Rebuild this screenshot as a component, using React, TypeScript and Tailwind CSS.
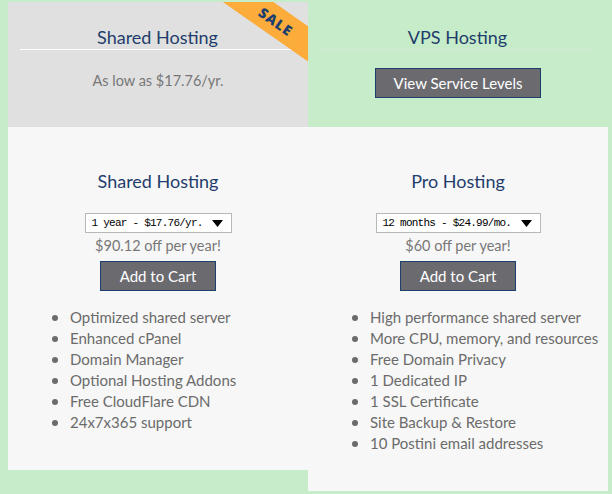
import React from "react";

const sharedFeatures = [
  "Optimized shared server",
  "Enhanced cPanel",
  "Domain Manager",
  "Optional Hosting Addons",
  "Free CloudFlare CDN",
  "24x7x365 support",
];

const proFeatures = [
  "High performance shared server",
  "More CPU, memory, and resources",
  "Free Domain Privacy",
  "1 Dedicated IP",
  "1 SSL Certificate",
  "Site Backup & Restore",
  "10 Postini email addresses",
];

function FakeSelect({ label, width }: { label: string; width: string }) {
  return (
    <div
      className={`mt-[19px] mx-auto h-[20px] ${width} flex items-center justify-between bg-white border border-[#b8b8b8] pl-[6px] pr-[8px]`}
    >
      <span className="font-['Liberation_Mono',monospace] text-[11px] tracking-[-0.75px] text-black">
        {label}
      </span>
      <svg width="11" height="7" viewBox="0 0 11 7">
        <path d="M0 0 L11 0 L5.5 7 Z" fill="#000" />
      </svg>
    </div>
  );
}

function Plan({
  title,
  option,
  selectWidth,
  saving,
  buttonWidth,
  features,
  height,
}: {
  title: string;
  option: string;
  selectWidth: string;
  saving: string;
  buttonWidth: string;
  features: string[];
  height: string;
}) {
  return (
    <div className={`${height} bg-[#f7f7f7] flex flex-col`}>
      <h2 className="pt-[41px] leading-[26px] text-[18px] text-center text-[#1f3d6b]">
        {title}
      </h2>
      <FakeSelect label={option} width={selectWidth} />
      <p className="mt-[3px] leading-[20px] text-[14.5px] text-center text-[#777]">
        {saving}
      </p>
      <button
        className={`mt-[5px] mx-auto h-[30px] ${buttonWidth} bg-[#6b6b6f] border border-[#1d3f6e] text-white text-[15px]`}
      >
        Add to Cart
      </button>
      <ul className="mt-[16px] pl-[44px]">
        {features.map((f) => (
          <li
            key={f}
            className="flex items-center h-[21px] text-[15px] text-[#6b6b6b] whitespace-nowrap"
          >
            <span className="shrink-0 w-[6px] h-[6px] rounded-full bg-[#6b6b6b] mr-[12px]" />
            {f}
          </li>
        ))}
      </ul>
    </div>
  );
}

export default function App() {
  return (
    <div className="w-[612px] h-[494px] bg-[#c7ecca] pt-[2px] pl-[8px] font-['Lato',sans-serif]">
      <div className="grid grid-cols-2 w-[600px] items-start">
        <div className="flex flex-col">
          <div className="relative h-[125px] bg-[#e0e0e0] overflow-hidden">
            <h2 className="ml-[12px] mr-[13px] pt-[23px] leading-[24px] text-[18px] text-center text-[#1f3d6b] border-b border-white">
              Shared Hosting
            </h2>
            <p className="mt-[21px] leading-[20px] text-[14.5px] text-center text-[#777]">
              As low as $17.76/yr.
            </p>
            <div className="absolute left-[188px] top-[5px] w-[160px] h-[29px] bg-[#fbac3a] rotate-[35deg] flex items-center justify-center">
              <span className="font-['Open_Sans',sans-serif] font-extrabold text-[14px] tracking-[1px] text-[#1d3f6e]">
                SALE
              </span>
            </div>
          </div>
          <Plan
            title="Shared Hosting"
            option="1 year - $17.76/yr."
            selectWidth="w-[147px]"
            saving="$90.12 off per year!"
            buttonWidth="w-[116px]"
            features={sharedFeatures}
            height="h-[343px]"
          />
        </div>
        <div className="flex flex-col">
          <div className="h-[125px]">
            <h2 className="ml-[12px] mr-[13px] pt-[23px] leading-[24px] text-[18px] text-center text-[#1f3d6b] border-b border-[#d6e8d7]">
              VPS Hosting
            </h2>
            <div className="flex justify-center">
              <button className="mt-[18px] h-[30px] w-[166px] bg-[#6b6b6f] border border-[#1d3f6e] text-white text-[15px]">
                View Service Levels
              </button>
            </div>
          </div>
          <Plan
            title="Pro Hosting"
            option="12 months - $24.99/mo."
            selectWidth="w-[165px]"
            saving="$60 off per year!"
            buttonWidth="w-[116px]"
            features={proFeatures}
            height="h-[364px]"
          />
        </div>
      </div>
    </div>
  );
}
